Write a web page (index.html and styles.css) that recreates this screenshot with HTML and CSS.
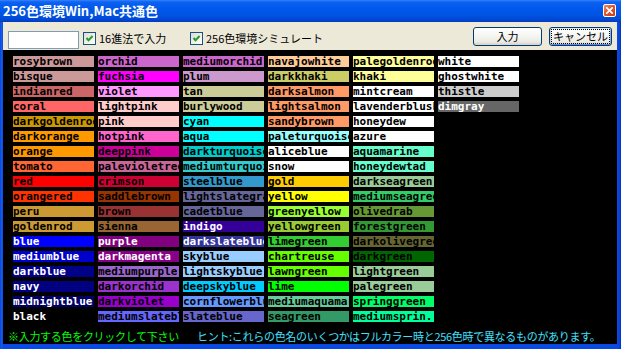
FILE: index.html
```html
<!DOCTYPE html>
<html lang="ja">
<head>
<meta charset="utf-8">
<title>256色環境Win,Mac共通色</title>
<link rel="stylesheet" href="styles.css">
</head>
<body>
<div class="window">
  <div class="titlebar">
    <span class="title">256色環境Win,Mac共通色</span>
    <span class="close"><svg width="7" height="7" viewBox="0 0 7 7"><path d="M0.8 0.8L6.2 6.2M6.2 0.8L0.8 6.2" stroke="#fff" stroke-width="1.7" stroke-linecap="square"/></svg></span>
  </div>
  <div class="client">
    <div class="toolbar">
      <input class="hexinput" type="text">
      <label class="check c1"><span class="box"><svg width="11" height="11" viewBox="0 0 11 11"><path d="M2.5 5L4.5 7.2L8.6 3" fill="none" stroke="#21a121" stroke-width="2"/></svg></span><span class="lbl">16進法で入力</span></label>
      <label class="check c2"><span class="box"><svg width="11" height="11" viewBox="0 0 11 11"><path d="M2.5 5L4.5 7.2L8.6 3" fill="none" stroke="#21a121" stroke-width="2"/></svg></span><span class="lbl">256色環境シミュレート</span></label>
      <button class="btn b1">入力</button>
      <button class="btn b2"><span class="focus">キャンセル</span></button>
    </div>
    <div class="canvas">
      <div class="grid">
        <div class="sw" style="background:#cc9999">rosybrown</div>
        <div class="sw" style="background:#cc9999">bisque</div>
        <div class="sw" style="background:#cc6666">indianred</div>
        <div class="sw" style="background:#ff6666">coral</div>
        <div class="sw" style="background:#cc9900">darkgoldenrod</div>
        <div class="sw" style="background:#ff9900">darkorange</div>
        <div class="sw" style="background:#ff9900">orange</div>
        <div class="sw" style="background:#ff6633">tomato</div>
        <div class="sw" style="background:#ff0000">red</div>
        <div class="sw" style="background:#ff3300">orangered</div>
        <div class="sw" style="background:#cc9933">peru</div>
        <div class="sw" style="background:#cc9933">goldenrod</div>
        <div class="sw light" style="background:#0000ff">blue</div>
        <div class="sw light" style="background:#0000cc">mediumblue</div>
        <div class="sw light" style="background:#000088">darkblue</div>
        <div class="sw light" style="background:#000080">navy</div>
        <div class="sw light" style="background:#000066">midnightblue</div>
        <div class="sw light" style="background:#000000">black</div>

        <div class="sw" style="background:#cc66cc">orchid</div>
        <div class="sw" style="background:#ff00ff">fuchsia</div>
        <div class="sw" style="background:#ff99ff">violet</div>
        <div class="sw" style="background:#ffcccc">lightpink</div>
        <div class="sw" style="background:#ffcccc">pink</div>
        <div class="sw" style="background:#ff66cc">hotpink</div>
        <div class="sw" style="background:#cc0099">deeppink</div>
        <div class="sw" style="background:#cc6699">palevioletred</div>
        <div class="sw" style="background:#cc0033">crimson</div>
        <div class="sw" style="background:#993300">saddlebrown</div>
        <div class="sw" style="background:#993333">brown</div>
        <div class="sw" style="background:#996633">sienna</div>
        <div class="sw light" style="background:#800080">purple</div>
        <div class="sw light" style="background:#880088">darkmagenta</div>
        <div class="sw" style="background:#9966cc">mediumpurple</div>
        <div class="sw" style="background:#9933cc">darkorchid</div>
        <div class="sw" style="background:#9900cc">darkviolet</div>
        <div class="sw" style="background:#6666ff">mediumslateblue</div>

        <div class="sw" style="background:#cc66cc">mediumorchid</div>
        <div class="sw" style="background:#cc99cc">plum</div>
        <div class="sw" style="background:#cccc99">tan</div>
        <div class="sw" style="background:#cccc99">burlywood</div>
        <div class="sw" style="background:#00ffff">cyan</div>
        <div class="sw" style="background:#00ffff">aqua</div>
        <div class="sw" style="background:#00cccc">darkturquoise</div>
        <div class="sw" style="background:#33cccc">mediumturquoise</div>
        <div class="sw" style="background:#3399cc">steelblue</div>
        <div class="sw" style="background:#666699">lightslategray</div>
        <div class="sw" style="background:#666699">cadetblue</div>
        <div class="sw light" style="background:#330099">indigo</div>
        <div class="sw light" style="background:#333399">darkslateblue</div>
        <div class="sw" style="background:#99ccff">skyblue</div>
        <div class="sw" style="background:#99ccff">lightskyblue</div>
        <div class="sw" style="background:#00ccff">deepskyblue</div>
        <div class="sw" style="background:#6699ff">cornflowerblue</div>
        <div class="sw" style="background:#6666cc">slateblue</div>

        <div class="sw" style="background:#ffcc99">navajowhite</div>
        <div class="sw" style="background:#cccc66">darkkhaki</div>
        <div class="sw" style="background:#ff9966">darksalmon</div>
        <div class="sw" style="background:#ff9966">lightsalmon</div>
        <div class="sw" style="background:#ff9966">sandybrown</div>
        <div class="sw" style="background:#99ffff">paleturquoise</div>
        <div class="sw" style="background:#ffffff">aliceblue</div>
        <div class="sw" style="background:#ffffff">snow</div>
        <div class="sw" style="background:#ffcc00">gold</div>
        <div class="sw" style="background:#ffff00">yellow</div>
        <div class="sw" style="background:#99ff33">greenyellow</div>
        <div class="sw" style="background:#99cc33">yellowgreen</div>
        <div class="sw" style="background:#33cc33">limegreen</div>
        <div class="sw" style="background:#66ff00">chartreuse</div>
        <div class="sw" style="background:#66ff00">lawngreen</div>
        <div class="sw" style="background:#00ff00">lime</div>
        <div class="sw" style="background:#66cc99">mediumaquamarine</div>
        <div class="sw" style="background:#339966">seagreen</div>

        <div class="sw" style="background:#ffff99">palegoldenrod</div>
        <div class="sw" style="background:#ffff99">khaki</div>
        <div class="sw" style="background:#ffffff">mintcream</div>
        <div class="sw" style="background:#ffffff">lavenderblush</div>
        <div class="sw" style="background:#ffffff">honeydew</div>
        <div class="sw" style="background:#ffffff">azure</div>
        <div class="sw" style="background:#66ffcc">aquamarine</div>
        <div class="sw" style="background:#66ffcc">honeydewtad</div>
        <div class="sw" style="background:#99cc99">darkseagreen</div>
        <div class="sw" style="background:#33cc66">mediumseagreen</div>
        <div class="sw" style="background:#669933">olivedrab</div>
        <div class="sw" style="background:#339933">forestgreen</div>
        <div class="sw" style="background:#666633">darkolivegreen</div>
        <div class="sw" style="background:#006600">darkgreen</div>
        <div class="sw" style="background:#99cc99">lightgreen</div>
        <div class="sw" style="background:#99cc99">palegreen</div>
        <div class="sw" style="background:#00ff66">springgreen</div>
        <div class="sw" style="background:#00ff99">mediumsprin..</div>

        <div class="sw" style="background:#ffffff">white</div>
        <div class="sw" style="background:#ffffff">ghostwhite</div>
        <div class="sw" style="background:#cccccc">thistle</div>
        <div class="sw light" style="background:#666666">dimgray</div>
      </div>
      <div class="footer">
        <span class="note">※入力する色をクリックして下さい</span>
        <span class="hint">ヒント:これらの色名のいくつかはフルカラー時と256色時で異なるものがあります。</span>
      </div>
    </div>
  </div>
</div>
</body>
</html>
```

FILE: styles.css
```css
html, body {
  margin: 0;
  padding: 0;
}
body {
  width: 621px;
  height: 349px;
  overflow: hidden;
  background: #0a3fd9;
}
.window {
  width: 621px;
  height: 349px;
  display: flex;
  flex-direction: column;
  background: linear-gradient(90deg, #0831c8 0, #1663f0 1px, #0a4ae4 3px, #0a4ae4 calc(100% - 4px), #0842d6 calc(100% - 1px), #0027a8 100%);
  box-sizing: border-box;
}
.titlebar {
  height: 22px;
  flex: none;
  display: flex;
  align-items: center;
  padding: 0 5px 0 3px;
  box-sizing: border-box;
  background: linear-gradient(180deg, #3b8dff 0, #1a6cf7 1px, #0a5ff0 3px, #0058ea 9px, #0054e3 15px, #0049d6 19px, #0040c6 21px, #003bb5 22px);
}
.title {
  flex: 1;
  font-family: "Noto Sans CJK JP", "Noto Sans", sans-serif;
  font-weight: 700;
  font-size: 13px;
  line-height: 22px;
  color: #ffffff;
  letter-spacing: 0;
}
.close {
  width: 13px;
  height: 13px;
  box-sizing: border-box;
  margin-top: -2px;
  border: 1px solid #ffffff;
  border-radius: 2px;
  background: linear-gradient(135deg, #ee8a6c 0, #e0562f 45%, #c93a14 100%);
  display: flex;
  align-items: center;
  justify-content: center;
}
.client {
  flex: 1;
  margin: 0 4px 5px 3px;
  display: flex;
  flex-direction: column;
  background: #ece9d8;
}
.toolbar {
  height: 28px;
  flex: none;
  box-sizing: border-box;
  padding: 5px 5px 0 5px;
  display: flex;
  align-items: flex-start;
  font-family: "Noto Sans CJK JP", "Noto Sans", sans-serif;
  font-size: 11px;
  color: #000;
}
.hexinput {
  width: 71px;
  height: 18px;
  margin: 4px 0 0 0;
  padding: 0;
  box-sizing: border-box;
  border: 1px solid #7f9db9;
  background: #ffffff;
  outline: none;
}
.check {
  display: flex;
  align-items: center;
  margin-top: 4px;
  height: 14px;
}
.c1 {
  margin-left: 4px;
  width: 107px;
}
.c2 {
  width: 130px;
}
.box {
  width: 13px;
  height: 13px;
  box-sizing: border-box;
  border: 1px solid #1c5180;
  background: linear-gradient(135deg, #dcdcd7 0, #f2f2ee 60%, #ffffff 100%);
  display: flex;
  align-items: center;
  justify-content: center;
  flex: none;
}
.lbl {
  margin-left: 3px;
  white-space: nowrap;
  line-height: 14px;
}
.btn {
  height: 19px;
  box-sizing: border-box;
  border: 1px solid #003c74;
  border-radius: 3px;
  background: linear-gradient(180deg, #ffffff 0, #f6f6f3 40%, #ecebe6 80%, #d6d0c5 100%);
  font-family: "Noto Sans CJK JP", "Noto Sans", sans-serif;
  font-size: 11px;
  line-height: 15px;
  color: #000;
  padding: 0;
  display: flex;
  align-items: center;
  justify-content: center;
}
.b1 {
  width: 69px;
  margin-left: auto;
}
.b2 {
  width: 63px;
  margin-left: 7px;
  box-shadow: inset 0 1px 0 #cee7ff, inset 1px 0 0 #bcd4f6, inset -1px 0 0 #89ade4, inset 0 -1px 0 #6982ee;
}
.focus {
  border: 1px dotted #000;
  padding: 0 1px;
  line-height: 13px;
}
.canvas {
  flex: 1;
  background: #000000;
  padding-top: 6px;
  display: flex;
  flex-direction: column;
}
.grid {
  margin-left: 10px;
  display: grid;
  grid-template-rows: repeat(18, 11px);
  grid-auto-flow: column;
  grid-auto-columns: 81px;
  column-gap: 4px;
  row-gap: 4px;
}
.sw {
  height: 11px;
  overflow: hidden;
  white-space: nowrap;
  font-family: "DejaVu Sans Mono", "Liberation Mono", monospace;
  font-weight: 700;
  font-size: 11px;
  line-height: 11px;
  color: #000000;
}
.sw.light {
  color: #ffffff;
}
.footer {
  margin-top: 8px;
  padding-left: 5px;
  display: flex;
  font-family: "Noto Sans CJK JP", "Noto Sans", sans-serif;
  font-size: 11px;
  line-height: 13px;
  white-space: nowrap;
}
.note {
  width: 189px;
  color: #00ff00;
  letter-spacing: -0.3px;
}
.hint {
  color: #40e0ff;
  letter-spacing: -0.3px;
}
```
